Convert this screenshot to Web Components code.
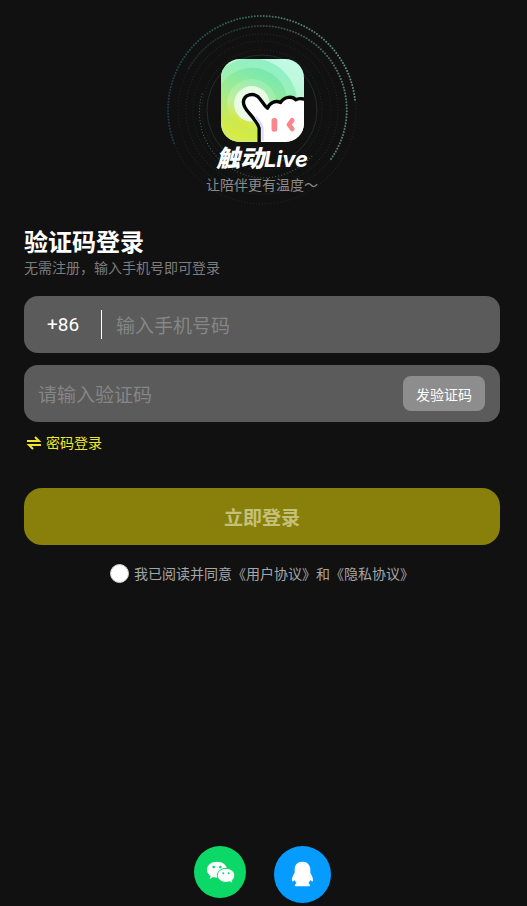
<!DOCTYPE html>
<html lang="zh-CN">
<head>
<meta charset="UTF-8">
<meta name="viewport" content="width=device-width, initial-scale=1">
<title>触动Live</title>
<style>
    body {
        margin: 0;
        background: #111;
        color: #fff;
        font-family: "Noto Sans CJK SC", "Noto Sans", sans-serif;
        font-size: 14px;
        line-height: 20px;
    }
</style>
</head>
<body>
<login-page>
    <brand-hero slot="hero" slogan="让陪伴更有温度～"></brand-hero>
    <login-form></login-form>
    <social-login slot="footer"></social-login>
</login-page>

<script>
// Page frame: hero on top, form under it, other ways to log in at the bottom
class LoginPage extends HTMLElement {
    constructor() {
        super();
        this.attachShadow({ mode: 'open' });
        this.shadowRoot.innerHTML = `
            <style>
                :host {
                    display: flex;
                    flex-direction: column;
                    box-sizing: border-box;
                    min-height: 100vh;
                    padding: 15px 27px 3px 24px;
                }

                footer {
                    margin-top: auto;
                    padding-top: 24px;
                }
            </style>

            <header><slot name="hero"></slot></header>
            <main><slot></slot></main>
            <footer><slot name="footer"></slot></footer>
        `;
    }
}

// The app icon: a hand pressing a button
class AppIcon extends HTMLElement {
    constructor() {
        super();
        this.attachShadow({ mode: 'open' });
        this.shadowRoot.innerHTML = `
            <style>
                :host {
                    display: block;
                    width: 83px;
                    height: 83px;
                }

                svg {
                    display: block;
                    width: 100%;
                    height: 100%;
                }
            </style>

            <svg viewBox="0 0 248 248" aria-hidden="true">
                <defs>
                    <clipPath id="tile"><rect width="248" height="248" rx="56"/></clipPath>
                    <linearGradient id="g1" x1="0.75" y1="0" x2="0.2" y2="1">
                        <stop offset="0" stop-color="#c2fae6"/>
                        <stop offset="0.5" stop-color="#b5f3c4"/>
                        <stop offset="1" stop-color="#dcec48"/>
                    </linearGradient>
                    <linearGradient id="g2" x1="0.7" y1="0" x2="0.25" y2="1">
                        <stop offset="0" stop-color="#8ef0cb"/>
                        <stop offset="0.5" stop-color="#a5f0a4"/>
                        <stop offset="1" stop-color="#dfea45"/>
                    </linearGradient>
                    <linearGradient id="g3" x1="0.7" y1="0" x2="0.25" y2="1">
                        <stop offset="0" stop-color="#74e8b4"/>
                        <stop offset="0.5" stop-color="#a4ec8c"/>
                        <stop offset="1" stop-color="#e3e92e"/>
                    </linearGradient>
                    <linearGradient id="g4" x1="0.7" y1="0" x2="0.2" y2="1">
                        <stop offset="0" stop-color="#93edb5"/>
                        <stop offset="0.6" stop-color="#c1ef9b"/>
                        <stop offset="1" stop-color="#dfe51f"/>
                    </linearGradient>
                </defs>
                <g clip-path="url(#tile)">
                    <rect width="248" height="248" fill="url(#g1)"/>
                    <circle cx="92" cy="134" r="136" fill="url(#g2)"/>
                    <circle cx="92" cy="134" r="108" fill="url(#g3)"/>
                    <circle cx="92" cy="134" r="74" fill="url(#g4)"/>
                    <circle cx="92" cy="134" r="53" fill="#e9fbe4"/>
                    <path d="M114 256V206C112 194 104 188 95 175C84 160 66 146 67 128C69 106 96 100 111 113C122 124 128 138 139 147C144 132 162 122 178 130C188 112 214 110 223 122C232 116 244 118 256 122V256Z" fill="#fff" stroke="#050505" stroke-width="10" stroke-linejoin="round"/>
                    <path d="M124 244V206C121 192 112 184 104 173" fill="none" stroke="#dcdcf8" stroke-width="7"/>
                    <rect x="151" y="176" width="17" height="41" rx="8" fill="#f9868c"/>
                    <path d="M213 183L203 196L213 209" fill="none" stroke="#f9868c" stroke-width="14" stroke-linecap="round" stroke-linejoin="round"/>
                </g>
            </svg>
        `;
    }
}

// Icon, name and slogan on top of dotted rings
class BrandHero extends HTMLElement {
    constructor() {
        super();
        this.attachShadow({ mode: 'open' });
        this.shadowRoot.innerHTML = `
            <style>
                :host {
                    display: grid;
                    justify-items: center;
                }

                .rings, .brand {
                    grid-area: 1 / 1;
                }

                .rings {
                    width: 190px;
                    height: 190px;
                    overflow: visible;
                    fill: none;
                    stroke-linecap: round;
                    stroke-width: 2;
                    stroke-dasharray: 0 3;
                }

                .brand {
                    display: flex;
                    flex-direction: column;
                    align-items: center;
                    padding-top: 44px;
                }

                h1 {
                    margin: 2px 0 0;
                    font-size: 24px;
                    line-height: 26px;
                    font-weight: 900;
                    font-style: italic;
                }

                h1 span {
                    font-family: Inter, "Noto Sans", sans-serif;
                    font-size: 22px;
                    font-weight: 700;
                }

                p {
                    margin: 2px 0 0;
                    color: #8b8b8b;
                }
            </style>

            <svg class="rings" viewBox="-95 -95 190 190" aria-hidden="true">
                <defs>
                    <linearGradient id="fade" x1="0" y1="0.6" x2="1" y2="0.3">
                        <stop offset="0" stop-color="#1d3c46"/>
                        <stop offset="0.5" stop-color="#2f6052"/>
                        <stop offset="1" stop-color="#6a9085"/>
                    </linearGradient>
                    <linearGradient id="fade2" x1="0" y1="0" x2="1" y2="0.4">
                        <stop offset="0" stop-color="#17211f"/>
                        <stop offset="1" stop-color="#5b7a70"/>
                    </linearGradient>
                </defs>
                <circle r="94" stroke="#252e2c" stroke-width="1"/>
                <path d="M-88 33A94 94 0 0 1 0 -94A94 94 0 0 1 93 -10" stroke="url(#fade)"/>
                <circle r="84" stroke="#222b29" stroke-width="1"/>
                <path d="M-73 -42A84 84 0 0 1 0 -84A84 84 0 0 1 69 49" stroke="url(#fade2)"/>
                <circle r="76" stroke="#263632" stroke-width="1"/>
                <circle r="69" stroke="#202b28" stroke-width="1"/>
                <path d="M-60 -16A66 66 0 0 0 0 68A68 68 0 0 0 50 46" stroke="#5d7c72" stroke-width="1"/>
                <circle r="55" stroke="#232e2b" stroke-width="1" stroke-dasharray="none"/>
                <circle r="60" stroke="#25312e" stroke-width="1"/>
            </svg>
            <div class="brand">
                <app-icon></app-icon>
                <h1>触动<span>Live</span></h1>
                <p id="slogan"></p>
            </div>
        `;
    }

    connectedCallback() {
        this.shadowRoot.getElementById('slogan').textContent = this.getAttribute('slogan');
    }
}

// Grey rounded box that holds an input and what stands beside it
class FieldBox extends HTMLElement {
    constructor() {
        super();
        this.attachShadow({ mode: 'open' });
        this.shadowRoot.innerHTML = `
            <style>
                :host {
                    display: flex;
                    align-items: center;
                    height: 57px;
                    border-radius: 14px;
                    background: #5b5b5b;
                }
            </style>

            <slot></slot>
        `;
    }
}

class LoginForm extends HTMLElement {
    constructor() {
        super();
        this.attachShadow({ mode: 'open' });
        this.shadowRoot.innerHTML = `
            <style>
                :host {
                    display: block;
                    padding-top: 21px;
                }

                h2 {
                    margin: 0;
                    font-size: 24px;
                    line-height: 30px;
                    font-weight: 700;
                }

                .hint {
                    margin: 1px 0 19px;
                    color: #7d7d7d;
                }

                form {
                    display: flex;
                    flex-direction: column;
                    gap: 12px;
                }

                button, input {
                    font: inherit;
                    color: inherit;
                    border: 0;
                    margin: 0;
                }

                .code {
                    box-sizing: border-box;
                    width: 78px;
                    padding-left: 23px;
                    border-right: 1px solid #fff;
                    font: 19px/29px Roboto, sans-serif;
                }

                input[type="tel"], input[type="text"] {
                    flex: 1;
                    min-width: 0;
                    padding: 0 14px;
                    background: none;
                    outline: none;
                    font-size: 19px;
                    line-height: 28px;
                }

                input::placeholder {
                    color: #868686;
                    opacity: 1;
                }

                .send {
                    height: 35px;
                    margin-right: 15px;
                    padding: 0 13px;
                    border-radius: 8px;
                    background: #8d8d8d;
                }

                .switch {
                    display: flex;
                    align-items: center;
                    align-self: flex-start;
                    gap: 4px;
                    padding-left: 2px;
                    color: #efe62c;
                    line-height: 17px;
                    text-decoration: none;
                }

                .switch svg {
                    width: 16px;
                    height: 14px;
                    fill: none;
                    stroke: currentColor;
                    stroke-width: 2;
                }

                .submit {
                    height: 57px;
                    margin-top: 25px;
                    border-radius: 18px;
                    background: #89800b;
                    color: #c5c07a;
                    font-size: 19px;
                    font-weight: 700;
                }

                .terms {
                    display: flex;
                    align-items: center;
                    justify-content: center;
                    gap: 5px;
                    margin-top: 6px;
                    color: #a6a6a6;
                }

                .terms input {
                    appearance: none;
                    flex: none;
                    box-sizing: border-box;
                    width: 19px;
                    height: 19px;
                    border: 1px solid #d0d0d0;
                    border-radius: 50%;
                    background: #fff;
                }

                .terms input:checked {
                    border: 5px solid #efe62c;
                }

                .terms a {
                    color: inherit;
                    text-decoration: none;
                }
            </style>

            <h2>验证码登录</h2>
            <p class="hint">无需注册，输入手机号即可登录</p>
            <form>
                <field-box>
                    <span class="code">+86</span>
                    <input type="tel" placeholder="输入手机号码" aria-label="手机号码">
                </field-box>
                <field-box>
                    <input type="text" inputmode="numeric" placeholder="请输入验证码" aria-label="验证码">
                    <button class="send" type="button">发验证码</button>
                </field-box>
                <a class="switch" href="#password">
                    <svg viewBox="0 0 16 14" aria-hidden="true">
                        <path d="M1 5H13L9 1M15 9H3L7 13"/>
                    </svg>
                    密码登录
                </a>
                <button class="submit" type="submit">立即登录</button>
                <div class="terms">
                    <input type="checkbox" id="agree">
                    <span><label for="agree">我已阅读并同意</label><a href="#terms">《用户协议》</a>和<a href="#privacy">《隐私协议》</a></span>
                </div>
            </form>
        `;
    }

    connectedCallback() {
        this.shadowRoot.querySelector('form').addEventListener('submit', (e) => e.preventDefault());
    }
}

class SocialLogin extends HTMLElement {
    constructor() {
        super();
        this.attachShadow({ mode: 'open' });
        this.shadowRoot.innerHTML = `
            <style>
                :host {
                    display: flex;
                    justify-content: center;
                    align-items: flex-start;
                    gap: 28px;
                }

                button {
                    padding: 0;
                    border: 0;
                    border-radius: 50%;
                    cursor: pointer;
                }

                svg {
                    display: block;
                    width: 100%;
                    height: 100%;
                }

                .wechat {
                    width: 52px;
                    height: 52px;
                    background: #0bd867;
                }

                .qq {
                    width: 57px;
                    height: 57px;
                    background: #069bff;
                }
            </style>

            <button class="wechat" type="button" aria-label="微信登录">
                <svg viewBox="0 0 156 156">
                    <path fill="#fff" d="M69 47C52 47 39 57 39 71C39 79 43 85 50 90L47 99L58 93Q64 95 71 95C87 95 99 85 99 71C99 57 86 47 69 47Z"/>
                    <circle cx="59" cy="63" r="4" fill="#0bd867"/>
                    <circle cx="79" cy="63" r="4" fill="#0bd867"/>
                    <path fill="#fff" stroke="#0bd867" stroke-width="3" d="M96 67C81 67 70 76 70 88C70 101 82 109 96 109Q102 109 107 107L117 113L114 104C119 100 122 95 122 88C122 76 110 67 96 67Z"/>
                    <circle cx="88" cy="82" r="3" fill="#0bd867"/>
                    <circle cx="104" cy="82" r="3" fill="#0bd867"/>
                </svg>
            </button>
            <button class="qq" type="button" aria-label="QQ登录">
                <svg viewBox="0 0 171 171">
                    <path fill="#fff" d="M85 47C70 47 62 57 62 71V80C57 88 53 96 54 104C55 108 60 106 62 102Q64 108 68 112C63 114 61 118 64 121H106C110 118 108 114 103 112Q107 108 109 102C112 106 116 108 117 104C118 96 113 88 109 80V71C109 57 100 47 85 47Z"/>
                </svg>
            </button>
        `;
    }
}

// Register the custom elements
customElements.define('app-icon', AppIcon);
customElements.define('brand-hero', BrandHero);
customElements.define('field-box', FieldBox);
customElements.define('login-form', LoginForm);
customElements.define('social-login', SocialLogin);
customElements.define('login-page', LoginPage);
</script>
</body>
</html>
